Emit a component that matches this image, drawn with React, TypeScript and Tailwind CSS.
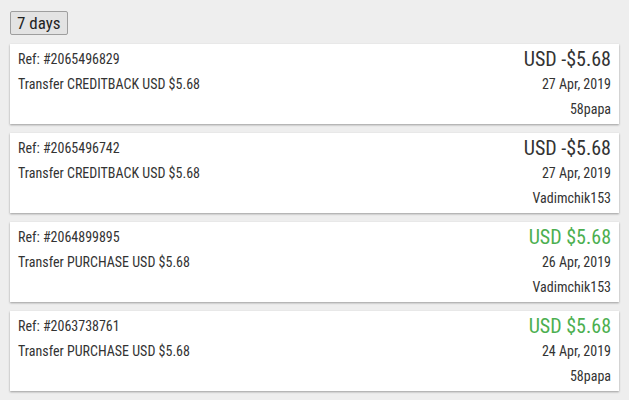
import React from "react";

const rows = [
  { ref: "2065496829", kind: "CREDITBACK", amount: "USD -$5.68", credit: false, date: "27 Apr, 2019", user: "58papa" },
  { ref: "2065496742", kind: "CREDITBACK", amount: "USD -$5.68", credit: false, date: "27 Apr, 2019", user: "Vadimchik153" },
  { ref: "2064899895", kind: "PURCHASE", amount: "USD $5.68", credit: true, date: "26 Apr, 2019", user: "Vadimchik153" },
  { ref: "2063738761", kind: "PURCHASE", amount: "USD $5.68", credit: true, date: "24 Apr, 2019", user: "58papa" },
];

export default function App() {
  return (
    <div className="min-h-[400px] w-[629px] bg-[#eeeeee] px-[10px] pt-[11px] text-[#333] font-['Roboto',sans-serif] font-stretch-condensed">
      <button className="h-[24px] px-[6px] border border-[#9e9e9e] rounded-[2px] bg-[#e3e3e3] text-[17px] leading-none text-[#222]">
        7 days
      </button>
      <div className="mt-[8px] flex flex-col gap-[9px]">
        {rows.map((r) => (
          <div
            key={r.ref}
            className="h-[80px] bg-white shadow-[0_1px_2px_rgba(0,0,0,0.35)] px-[8px] flex justify-between"
          >
            <div className="pt-[6px] text-[14px] leading-[18px]">
              <div>Ref: #{r.ref}</div>
              <div className="mt-[7px]">Transfer {r.kind} USD $5.68</div>
            </div>
            <div className="pt-[3px] text-right text-[14px] leading-[18px]">
              <div className={`text-[20px] leading-[24px] ${r.credit ? "text-[#4caf50]" : "text-[#333]"}`}>
                {r.amount}
              </div>
              <div className="mt-[4px]">{r.date}</div>
              <div className="mt-[7px]">{r.user}</div>
            </div>
          </div>
        ))}
      </div>
    </div>
  );
}
